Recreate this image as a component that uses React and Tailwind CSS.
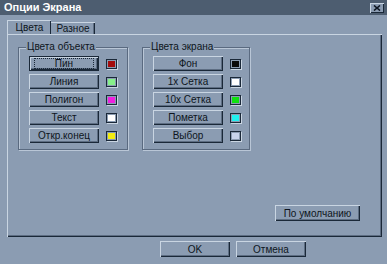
import React from "react";

const objectColors = [
  { label: "Пин", color: "#a40c0c", focus: true },
  { label: "Линия", color: "#86f08a" },
  { label: "Полигон", color: "#f020e0" },
  { label: "Текст", color: "#ffffff" },
  { label: "Откр.конец", color: "#f4ec10" },
];

const screenColors = [
  { label: "Фон", color: "#0a0a0a" },
  { label: "1x Сетка", color: "#ffffff" },
  { label: "10x Сетка", color: "#10e010" },
  { label: "Пометка", color: "#20f0f0" },
  { label: "Выбор", color: "#c8d4ec" },
];

const Button = ({ children, className = "", focus }) => (
  <div
    className={`flex items-center justify-center bg-[#8b9cb2] text-[10px] text-[#0d1520] shadow-[inset_1px_1px_0_#c9d5e2,inset_-1px_-1px_0_#1a2838,inset_-2px_-2px_0_#5d6d82] ${
      focus ? "border border-[#1a2838]" : ""
    } ${className}`}
  >
    {focus ? (
      <span className="flex h-[11px] w-[60px] items-center justify-center border border-dotted border-[#1a2838] leading-none">
        {children}
      </span>
    ) : (
      children
    )}
  </div>
);

const Group = ({ title, items, className }) => (
  <div className={`relative border border-[#5a6a80] shadow-[1px_1px_0_#b9c6d6,inset_1px_1px_0_#b9c6d6] ${className}`}>
    <span className="absolute -top-[7px] left-[7px] bg-[#8b9cb2] px-[1px] text-[10px] leading-[12px] text-[#0d1520]">
      {title}
    </span>
    <div className="flex flex-col gap-[3px] pb-[6px] pl-[10px] pt-[8px]">
      {items.map((it) => (
        <div key={it.label} className="flex items-center gap-[7px]">
          <Button focus={it.focus} className="h-[15px] w-[70px]">
            {it.label}
          </Button>
          <div className="h-[10px] w-[11px] border border-[#1a2838] p-[1px] shadow-[1px_1px_0_#c9d5e2]">
            <div className="h-full w-full" style={{ background: it.color }} />
          </div>
        </div>
      ))}
    </div>
  </div>
);

export default function App() {
  return (
    <div
      className="flex h-[264px] w-[387px] flex-col bg-[#8b9cb2] text-[#0d1520]"
      style={{ fontFamily: '"Liberation Sans", Arial, sans-serif' }}
    >
      <div className="flex h-[15px] items-center justify-between bg-[#4d5d70] pl-[4px] pr-[3px]">
        <span className="text-[11px] font-bold leading-none text-white">Опции Экрана</span>
        <div className="flex h-[10px] w-[14px] items-center justify-center bg-[#8b9cb2] shadow-[inset_1px_1px_0_#c9d5e2,inset_-1px_-1px_0_#1a2838]">
          <svg width="8" height="6" viewBox="0 0 8 6">
            <path d="M1 0.5 L7 5.5 M7 0.5 L1 5.5" stroke="#0d1520" strokeWidth="1.6" />
          </svg>
        </div>
      </div>

      <div className="ml-[7px] mt-[5px] flex h-[14px] items-end">
        <div className="relative z-10 flex h-[14px] w-[44px] items-center justify-center rounded-t-[1px] border-l border-t border-[#c9d5e2] text-[10px] shadow-[inset_-1px_0_0_#1a2838]">
          Цвета
        </div>
        <div className="flex h-[12px] w-[44px] items-center justify-center border-t border-[#c9d5e2] text-[10px] shadow-[inset_-1px_0_0_#1a2838,inset_-2px_0_0_#5d6d82]">
          Разное
        </div>
      </div>

      <div className="ml-[7px] flex h-[203px] w-[375px] flex-col border-l border-t border-[#c9d5e2] shadow-[inset_-1px_-1px_0_#1a2838,inset_-2px_-2px_0_#5d6d82]">
        <div className="ml-[10px] mt-[12px] flex gap-[14px]">
          <Group title="Цвета объекта" items={objectColors} className="w-[110px]" />
          <Group title="Цвета экрана" items={screenColors} className="w-[108px]" />
        </div>
        <div className="mr-[22px] mt-[55px] flex justify-end">
          <Button className="h-[16px] w-[85px]">По умолчанию</Button>
        </div>
      </div>

      <div className="ml-[160px] mt-[4px] flex gap-[6px]">
        <Button className="h-[16px] w-[70px]">OK</Button>
        <Button className="h-[16px] w-[70px]">Отмена</Button>
      </div>
    </div>
  );
}
